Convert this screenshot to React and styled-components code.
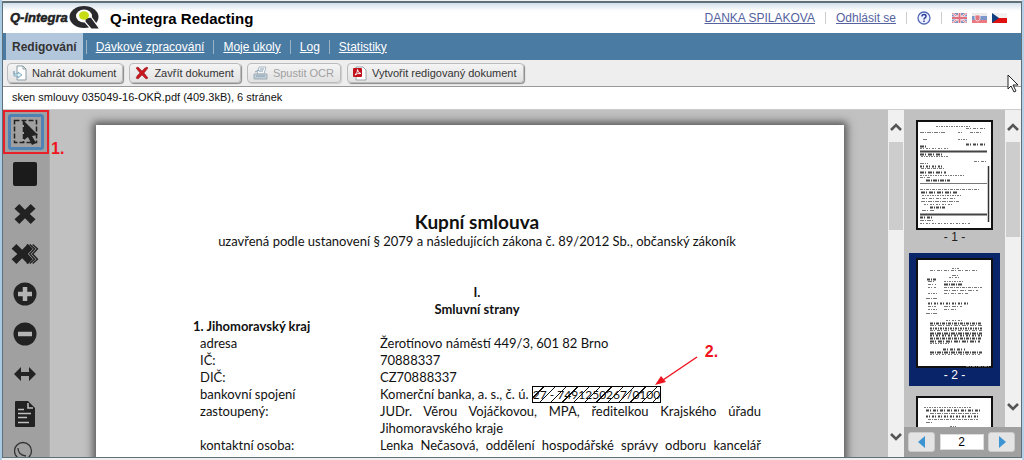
import React, { useState } from 'react'
import styled, { createGlobalStyle } from 'styled-components'

const color = {
  blue: '#4a7ba3',
  tab: '#b3c7dc',
  link: '#5562a0',
  panel: '#c1c1c1',
  rail: '#a0a0a0',
  track: '#f0f0f0',
  navy: '#0a246a',
  mark: '#e8202a',
}

const GlobalStyle = createGlobalStyle`
  * {
    box-sizing: border-box;
  }

  html, body, #root {
    height: 100%;
  }

  body {
    margin: 0;
    overflow: hidden;
    background: #f0f0f0;
    color: #111;
    font-family: "Liberation Sans", Arial, sans-serif;
    font-size: 12px;
  }
`

const Frame = styled.div`
  height: 100%;
  display: flex;
  flex-direction: column;
  padding: 1px 0 2px;
  border-left: 2px solid #a9cbe4;
  border-right: 2px solid #b4d0e8;
`

const Window = styled.div`
  flex: 1;
  min-height: 0;
  display: flex;
  flex-direction: column;
  border: 1px solid #5f7078;
  border-top-width: 2px;
  background: #fff;
`

const Header = styled.header`
  display: flex;
  align-items: center;
  justify-content: space-between;
  height: 30px;
  padding: 0 14px 0 6px;
  background: linear-gradient(#d3e0ea, #fff 8px);
`

const Brand = styled.div`
  display: flex;
  align-items: center;
  gap: 11px;
`

const Title = styled.h1`
  margin: 0;
  font-size: 15px;
  color: #000;
`

const UserLinks = styled.div`
  display: flex;
  align-items: center;
  gap: 10px;
`

const UserLink = styled.a`
  color: ${color.link};
  font-size: 12px;
`

const Divider = styled.span`
  width: 1px;
  height: ${props => (props.$tall ? 14 : 12)}px;
  background: ${props => (props.$tall ? '#9db3c6' : '#ccc')};
`

const HelpButton = styled.button`
  display: flex;
  padding: 0;
  border: 0;
  background: none;
`

const Flags = styled.div`
  display: flex;
  gap: 5px;
`

const FlagButton = styled(HelpButton)`
  opacity: ${props => (props.$active ? 1 : 0.6)};
`

const Nav = styled.nav`
  display: flex;
  align-items: center;
  gap: 9px;
  height: 27px;
  padding-left: 3px;
  background: ${color.blue};
`

const NavLink = styled.a`
  color: #fff;
  font-size: 12px;
`

const ActiveTab = styled.a`
  display: flex;
  align-items: center;
  align-self: stretch;
  padding: 0 6px;
  margin-right: -6px;
  background: ${color.tab};
  color: #333;
  font-weight: bold;
  text-decoration: none;
`

const Toolbar = styled.div`
  display: flex;
  align-items: center;
  gap: 6px;
  height: 27px;
  padding: 0 4px;
  border-bottom: 1px solid #999;
  background: #eee;
`

const ToolbarButton = styled.button`
  display: flex;
  align-items: center;
  gap: 5px;
  height: 20px;
  padding: 0 6px 0 5px;
  border: 1px solid #bbb;
  border-radius: 4px;
  background: linear-gradient(#f4f4f4, #e2e2e2);
  box-shadow: 1px 1px 1px #888;
  color: #333;
  font: 11px "Liberation Sans", Arial, sans-serif;
  white-space: nowrap;

  &:disabled {
    color: #a0a0a0;
    box-shadow: 1px 1px 1px #ccc;
  }
`

const FileInfo = styled.div`
  height: 23px;
  padding-left: 9px;
  line-height: 21px;
  font-size: 11px;
  border-bottom: 1px solid #ccc;
`

const Workspace = styled.div`
  flex: 1;
  min-height: 0;
  display: flex;
  background: ${color.panel};
`

const Rail = styled.aside`
  flex: none;
  width: 47px;
  display: flex;
  flex-direction: column;
  align-items: flex-start;
  overflow: hidden;
  background: ${color.rail};
  border-right: 1px solid #aaa;
`

const RailButton = styled.button`
  flex: none;
  display: flex;
  align-items: center;
  justify-content: center;
  width: 44px;
  height: 40px;
  padding: 0;
  border: 0;
  background: none;
`

const SelectButton = styled(RailButton)`
  width: 46px;
  height: 44px;
  border: 2px solid ${color.mark};
`

const SelectFace = styled.span`
  display: flex;
  align-items: center;
  justify-content: center;
  width: 36px;
  height: 36px;
  border: 3px solid #4f83b5;
  border-radius: 3px;
`

const Viewer = styled.main`
  flex: 1;
  min-width: 0;
  display: flex;
  justify-content: center;
  position: relative;
  padding: 15px 44px 0 46px;
  overflow: hidden;
`

const StepNote = styled.span`
  position: absolute;
  left: ${props => props.$left};
  top: ${props => props.$top};
  color: #f0141e;
  font: bold 16px "Liberation Sans", Arial, sans-serif;
`

const Page = styled.article`
  flex: 1;
  padding: 86px 83px 0 97px;
  height: 420px;
  background: #fff;
  box-shadow: 0 0 8px 3px #555;
  color: #111;
  font: 13px/17px Lato, Carlito, sans-serif;
`

const DocTitle = styled.h2`
  margin: 0;
  font-size: 19px;
  line-height: 22px;
  text-align: center;
`

const Centered = styled.p`
  margin: 0;
  text-align: center;
  font-weight: ${props => (props.$bold ? 'bold' : 'normal')};
`

const Article = styled.section`
  padding-top: 34px;
`

const PartyName = styled.h3`
  margin: 0;
  font-size: 13px;
`

const Parties = styled.dl`
  display: grid;
  grid-template-columns: 180px 1fr;
  grid-auto-rows: minmax(17px, auto);
  margin: 0 0 0 7px;
`

const Term = styled.dt``

const Detail = styled.dd`
  margin: 0;
  text-align: justify;

  &:last-child {
    text-align-last: justify;
  }
`

const Redacted = styled.span`
  position: relative;
  display: inline-block;
  height: 17px;
  border: 1px solid #000;
  background: repeating-linear-gradient(135deg, transparent 0 7px, #111 7px 8px);
  font-size: 12px;
  line-height: 15px;
  vertical-align: top;
`

const Arrow = styled.svg`
  position: absolute;
  left: 122px;
  top: -33px;
`

const Scrollbar = styled.div`
  flex: none;
  width: 16px;
  display: flex;
  flex-direction: column;
  align-items: center;
  background: ${color.track};
`

const ScrollButton = styled.button`
  display: flex;
  align-items: center;
  justify-content: center;
  width: 16px;
  height: ${props => props.$size}px;
  padding: 0;
  border: 0;
  background: none;
`

const Thumb = styled.div`
  width: 14px;
  height: ${props => props.$size}px;
  margin-bottom: auto;
  background: #cdcdcd;
`

const Sidebar = styled.aside`
  flex: none;
  width: 117px;
  display: flex;
  flex-direction: column;
`

const ThumbArea = styled.div`
  flex: 1;
  min-height: 0;
  display: flex;
`

const ThumbList = styled.div`
  flex: 1;
  display: flex;
  flex-direction: column;
  gap: 5px;
  padding: 5px 5px 0;
  overflow: hidden;
`

const Thumbnail = styled.button`
  flex: none;
  display: flex;
  flex-direction: column;
  align-items: center;
  height: 133px;
  padding: 5px 0 0;
  border: 0;
  background: ${props => (props.$active ? color.navy : 'none')};
  color: ${props => (props.$active ? '#fff' : '#222')};
  font: 12px/14px "Liberation Sans", Arial, sans-serif;
`

const Pager = styled.div`
  display: flex;
  align-items: center;
  justify-content: space-between;
  height: 30px;
  padding: 0 6px 0 4px;
  background: ${color.rail};
`

const PagerButton = styled.button`
  display: flex;
  align-items: center;
  justify-content: center;
  width: 27px;
  height: 20px;
  padding: 0;
  border: 1px solid #ccc;
  border-radius: 3px;
  background: #e4e4e4;
`

const PageInput = styled.input`
  width: 44px;
  height: 16px;
  padding: 0;
  border: 1px solid #ddd;
  background: #fff;
  text-align: center;
  font: 12px "Liberation Sans", Arial, sans-serif;
`

const MousePointer = styled.svg`
  position: absolute;
  right: 5px;
  top: 74px;
`

const Logo = () => (
  <svg width="90" height="27" viewBox="0 0 90 27" role="img" aria-label="Q-integra">
    <text x="1" y="17" fontFamily="Liberation Sans" fontSize="13" fontWeight="bold" fontStyle="italic" fill="#222" stroke="#222" strokeWidth=".5">Q-integra</text>
    <ellipse cx="75" cy="12" rx="14.500" ry="11" fill="#2a2a2e" />
    <ellipse cx="75" cy="11" rx="8" ry="6.500" fill="#fff" />
    <path d="M76 13l6-1 9 12h-9l-6-7z" fill="#2a2a2e" stroke="#fff" strokeWidth="1.200" />
    <ellipse cx="75" cy="10.500" rx="5" ry="4.200" fill="#c8dc14" />
  </svg>
)

const HelpIcon = () => (
  <svg width="14" height="14" viewBox="0 0 14 14">
    <circle cx="7" cy="7" r="6" fill="#eef1ff" stroke="#5369b8" strokeWidth="1.3" />
    <path d="M5 5.5q0-2 2-2t2 1.700q0 1-1 1.600t-1 1.600M7 9.600v1.400" fill="none" stroke="#2d3f9a" strokeWidth="1.500" />
  </svg>
)

const UkFlag = () => (
  <svg width="15" height="10" viewBox="0 0 15 10">
    <path fill="#24408e" d="M0 0h15v10H0z" />
    <path d="M0 0l15 10M15 0L0 10" stroke="#fff" strokeWidth="2" />
    <path d="M0 0l15 10M15 0L0 10" stroke="#d0142c" />
    <path d="M7.500 0v10M0 5h15" stroke="#fff" strokeWidth="3.200" />
    <path d="M7.500 0v10M0 5h15" stroke="#d0142c" strokeWidth="2" />
  </svg>
)

const SkFlag = () => (
  <svg width="15" height="10" viewBox="0 0 15 10">
    <path fill="#ddd" d="M0 0h15v4H0z" />
    <path fill="#2852a8" d="M0 3h15v4H0z" />
    <path fill="#e0202c" d="M0 7h15v3H0z" />
    <path d="M3 2h5v4q-1 2-2.500 2T3 6z" fill="#d02030" stroke="#fff" strokeWidth=".7" />
  </svg>
)

const CzFlag = () => (
  <svg width="15" height="10" viewBox="0 0 15 10">
    <path fill="#f2f2f2" d="M0 0h15v5H0z" />
    <path fill="#e01010" d="M0 5h15v5H0z" />
    <path fill="#123f80" d="M0 0l7 5-7 5z" />
  </svg>
)

const UploadIcon = () => (
  <svg width="14" height="16" viewBox="0 0 14 16">
    <path d="M4 1h6l3 3v11H4z" fill="#fff" stroke="#8a9ba5" />
    <path d="M10 1v3h3" fill="none" stroke="#8a9ba5" />
    <path d="M1 6v3h4V7l4 3-4 3v-2H1z" fill="#dff0f7" stroke="#6d9db4" strokeWidth=".8" />
  </svg>
)

const CloseIcon = () => (
  <svg width="14" height="14" viewBox="0 0 14 14">
    <path d="M1 2l2-1 4 4q2-3 5-4l1 1-4 5 4 5-2 1-4-4-4 4-2-1q1-3 4-5z" fill="#c8171e" stroke="#8e1015" strokeWidth=".5" />
  </svg>
)

const OcrIcon = () => (
  <svg width="15" height="15" viewBox="0 0 15 15" opacity=".6">
    <path d="M4 8l2-7h7l-2 7z" fill="#fff" stroke="#7d98aa" />
    <path d="M1 8h13v5H1z" fill="#a9bdc9" stroke="#6d8798" />
    <path d="M3 10h9M2 6l4-2M7 3h4M6 5h4" stroke="#456f8c" />
  </svg>
)

const PdfIcon = () => (
  <svg width="14" height="15" viewBox="0 0 14 15">
    <path d="M3 1h7l3 3v10H3z" fill="#fff" stroke="#9aa4aa" />
    <rect y="2" width="9" height="9" rx="1" fill="#c1121c" />
    <path d="M2 9q3-3 2.500-5.500Q5 7 8 7.500 4 7 2 9z" fill="none" stroke="#fff" strokeWidth=".9" />
  </svg>
)

const SelectIcon = () => (
  <svg width="26" height="28" viewBox="0 0 26 28">
    <path d="M1.500 2.500h22v22h-22zM10.500 2v23" fill="none" stroke="#222" strokeWidth="1.500" strokeDasharray="5 2" />
    <path d="M11 3v19l4-3 4 8 4-2-4-7 6-1z" fill="#222" />
  </svg>
)

const SquareIcon = () => (
  <svg width="24" height="24" viewBox="0 0 24 24">
    <rect width="24" height="24" rx="2" fill="#1b1b1b" />
  </svg>
)

const crossPath = 'M5 1l6 6 6-6 5 5-6 5.500 6 5.500-5 5-6-6-6 6-5-5 6-5.500L0 6z'

const CrossIcon = () => (
  <svg width="22" height="22" viewBox="0 0 22 23">
    <path d={crossPath} fill="#222" />
  </svg>
)

const CrossAllIcon = () => (
  <svg width="28" height="22" viewBox="0 0 28 23">
    <path d={crossPath} fill="#222" />
    <path d="M16 1.500l5 4.500-5 5.500 5 5.500-5 4.500M19 1.500l5 4.500-5 5.500 5 5.500-5 4.500M22 1.500l5 4.500-5 5.500 5 5.500-5 4.500" fill="none" stroke="#222" strokeWidth="1.500" />
  </svg>
)

const ZoomIcon = ({ plus }) => (
  <svg width="24" height="24" viewBox="0 0 24 24">
    <circle cx="12" cy="12" r="11.500" fill="#222" />
    <path d={plus ? 'M5 12h14M12 5v14' : 'M5 12h14'} stroke="#b4b4b4" strokeWidth="4.500" />
  </svg>
)

const FitIcon = () => (
  <svg width="24" height="14" viewBox="0 0 24 14">
    <path d="M1 7l7-7v5h8V0l7 7-7 7V9H8v5z" fill="#222" />
  </svg>
)

const TextIcon = () => (
  <svg width="20" height="26" viewBox="0 0 20 26">
    <path d="M1 0h12l7 7v18q0 1-1 1H1q-1 0-1-1V1q0-1 1-1z" fill="#222" />
    <path d="M13 2v5h5M3 8.500h6M3 12.500h13M3 16.500h9M3 21.500h11" fill="none" stroke="#c0c0c0" strokeWidth="1.500" />
  </svg>
)

const SearchIcon = () => (
  <svg width="22" height="26" viewBox="0 0 22 26">
    <circle cx="9" cy="10" r="8.500" fill="none" stroke="#333" strokeWidth="1.300" />
    <path d="M4 7q0 7 8 8M15 16l6 8" fill="none" stroke="#333" strokeWidth="1.300" />
  </svg>
)

const Chevron = ({ down }) => (
  <svg width="12" height="9" viewBox="0 0 12 9">
    <path d={down ? 'M1 1l5 5 5-5' : 'M1 8l5-5 5 5'} fill="none" stroke="#555" strokeWidth="2.600" />
  </svg>
)

const Triangle = ({ right }) => (
  <svg width="8" height="12" viewBox="0 0 8 12">
    <path d={right ? 'M1 0l7 6-7 6z' : 'M7 0L0 6l7 6z'} fill="#3c94d2" />
  </svg>
)

// rows: [y, x, width, weight]
const miniPages = {
  1: [
    [5, 20, 34, 1], [7, 50, 21, 1], [11, 4, 26, 1], [11, 42, 4, 1], [11, 54, 12, 1], [18, 7, 4, 1], [18, 42, 10, 1],
    [23, 50, 20, 2], [25, 4, 6, 2], [27, 4, 30, 1], [30, 4, 67, 2], [33, 4, 24, 2], [35, 5, 28, 1], [40, 58, 13, 1],
    [42, 4, 8, 1], [45, 4, 22, 2], [47, 5, 24, 1], [51, 4, 26, 2], [54, 4, 44, 1], [56, 4, 10, 1], [59, 10, 24, 2],
    [62, 4, 67, 1], [68, 4, 60, 1], [71, 5, 36, 2], [74, 6, 40, 1], [77, 6, 34, 1], [80, 5, 38, 1], [83, 8, 30, 1],
    [86, 14, 15, 2], [89, 6, 12, 1], [93, 4, 67, 2], [96, 4, 12, 2], [99, 4, 14, 1], [102, 4, 50, 1],
  ],
  2: [
    [9, 36, 8, 1], [11, 14, 48, 1], [16, 36, 6, 1], [18, 33, 12, 1], [20, 11, 10, 2], [22, 12, 8, 1], [22, 28, 20, 1],
    [25, 12, 8, 1], [25, 28, 18, 2], [28, 12, 9, 1], [28, 28, 38, 1], [31, 28, 34, 1], [34, 12, 9, 1], [34, 28, 24, 1],
    [39, 10, 12, 1], [44, 12, 40, 2], [47, 12, 8, 1], [47, 28, 18, 1], [50, 12, 10, 1], [50, 28, 14, 1], [54, 10, 12, 1],
    [61, 30, 16, 1], [64, 14, 52, 2], [66, 14, 52, 1], [69, 14, 52, 2], [71, 14, 52, 1], [74, 14, 52, 2], [76, 14, 52, 2],
    [79, 14, 51, 2], [82, 14, 50, 2], [84, 14, 20, 1], [90, 27, 22, 2], [93, 14, 52, 2], [95, 14, 50, 1], [107, 50, 24, 1],
  ],
  3: [
    [10, 8, 48, 1], [13, 10, 54, 2], [16, 14, 48, 1], [19, 10, 52, 2], [22, 12, 50, 1], [25, 10, 6, 1], [29, 34, 6, 1],
  ],
}

const MiniPage = ({ number }) => (
  <svg width="77" height="110" viewBox="0 0 77 110">
    <rect x="1" y="1" width="75" height="108" fill="#fff" stroke="#111" strokeWidth="2" />
    {miniPages[number].map(([y, x, width, weight], i) => (
      <path
        key={i}
        d={`M${x} ${y + 1.5}h${width}`}
        stroke={weight > 1 ? '#444' : '#777'}
        strokeWidth={weight > 1 ? 1.8 : 1}
        strokeDasharray={width > 64 ? null : `${2 + (i % 3)} 1 1 ${1 + (i % 2)}`}
      />
    ))}
    {number === 1 && <path d="M72.500 46v56" stroke="#333" strokeWidth="1.500" />}
  </svg>
)

const thumbnails = [
  { number: 1, caption: '- 1 -' },
  { number: 2, caption: '- 2 -' },
  { number: 3 },
]

const party = [
  ['adresa', 'Žerotínovo náměstí 449/3, 601 82 Brno'],
  ['IČ:', '70888337'],
  ['DIČ:', 'CZ70888337'],
  ['bankovní spojení', 'Komerční banka, a. s., č. ú. ', '27 - 7491250267/0100'],
  ['zastoupený:', 'JUDr. Věrou Vojáčkovou, MPA, ředitelkou Krajského úřadu Jihomoravského kraje'],
  ['kontaktní osoba:', 'Lenka Nečasová, oddělení hospodářské správy odboru kancelář'],
]

const railTools = [
  ['Začernit', SquareIcon],
  ['Smazat', CrossIcon],
  ['Smazat vše', CrossAllIcon],
  ['Zvětšit', () => <ZoomIcon plus />],
  ['Zmenšit', ZoomIcon],
  ['Na šířku', FitIcon],
  ['Text', TextIcon],
  ['Hledat', SearchIcon],
]

function App() {
  const [page, setPage] = useState(2)

  return (
    <Frame>
      <GlobalStyle />
      <Window>
        <Header>
          <Brand>
            <Logo />
            <Title>Q-integra Redacting</Title>
          </Brand>
          <UserLinks>
            <UserLink href="#user">DANKA SPILAKOVA</UserLink>
            <Divider />
            <UserLink href="#logout">Odhlásit se</UserLink>
            <Divider />
            <HelpButton aria-label="Nápověda"><HelpIcon /></HelpButton>
            <Divider />
            <Flags>
              <FlagButton aria-label="English"><UkFlag /></FlagButton>
              <FlagButton aria-label="Slovensky"><SkFlag /></FlagButton>
              <FlagButton aria-label="Česky" $active><CzFlag /></FlagButton>
            </Flags>
          </UserLinks>
        </Header>
        <Nav>
          <ActiveTab href="#redigovani">Redigování</ActiveTab>
          <Divider $tall />
          <NavLink href="#davky">Dávkové zpracování</NavLink>
          <Divider $tall />
          <NavLink href="#ukoly">Moje úkoly</NavLink>
          <Divider $tall />
          <NavLink href="#log">Log</NavLink>
          <Divider $tall />
          <NavLink href="#statistiky">Statistiky</NavLink>
        </Nav>
        <Toolbar>
          <ToolbarButton><UploadIcon />Nahrát dokument</ToolbarButton>
          <ToolbarButton><CloseIcon />Zavřít dokument</ToolbarButton>
          <ToolbarButton disabled><OcrIcon />Spustit OCR</ToolbarButton>
          <ToolbarButton><PdfIcon />Vytvořit redigovaný dokument</ToolbarButton>
        </Toolbar>
        <FileInfo>sken smlouvy 035049-16-OKŘ.pdf (409.3kB), 6 stránek</FileInfo>
        <Workspace>
          <Rail>
            <SelectButton aria-label="Výběr">
              <SelectFace><SelectIcon /></SelectFace>
            </SelectButton>
            {railTools.map(([label, ToolIcon]) => (
              <RailButton key={label} aria-label={label}><ToolIcon /></RailButton>
            ))}
          </Rail>
          <Viewer>
            <StepNote $left="1px" $top="30px">1.</StepNote>
            <Page>
              <DocTitle>Kupní smlouva</DocTitle>
              <Centered>uzavřená podle ustanovení § 2079 a následujících zákona č. 89/2012 Sb., občanský zákoník</Centered>
              <Article>
                <Centered $bold>I.</Centered>
                <Centered $bold>Smluvní strany</Centered>
                <PartyName>1. Jihomoravský kraj</PartyName>
                <Parties>
                  {party.map(([term, detail, secret]) => (
                    <React.Fragment key={term}>
                      <Term>{term}</Term>
                      <Detail>
                        {detail}
                        {secret && (
                          <Redacted>
                            {secret}
                            <Arrow width="70" height="36" viewBox="0 0 70 36">
                              <path d="M42 3L8 26" stroke="#f0141e" strokeWidth="1.500" />
                              <path d="M0 31l6-9 5 6z" fill="#f0141e" />
                            </Arrow>
                            <StepNote $left="172px" $top="-44px">2.</StepNote>
                          </Redacted>
                        )}
                      </Detail>
                    </React.Fragment>
                  ))}
                </Parties>
              </Article>
            </Page>
          </Viewer>
          <Scrollbar>
            <ScrollButton $size={32} aria-label="Nahoru"><Chevron /></ScrollButton>
            <Thumb $size={88} />
            <ScrollButton $size={40} aria-label="Dolů"><Chevron down /></ScrollButton>
          </Scrollbar>
          <Sidebar>
            <ThumbArea>
              <ThumbList>
                {thumbnails.map(({ number, caption }) => (
                  <Thumbnail
                    key={number}
                    aria-label={`Strana ${number}`}
                    $active={number === page}
                    onClick={() => setPage(number)}
                  >
                    <MiniPage number={number} />
                    {caption}
                  </Thumbnail>
                ))}
              </ThumbList>
              <Scrollbar>
                <ScrollButton $size={32} aria-label="Nahoru"><Chevron /></ScrollButton>
                <Thumb $size={95} />
                <ScrollButton $size={40} aria-label="Dolů"><Chevron down /></ScrollButton>
              </Scrollbar>
            </ThumbArea>
            <Pager>
              <PagerButton aria-label="Předchozí" onClick={() => setPage(Math.max(1, page - 1))}><Triangle /></PagerButton>
              <PageInput aria-label="Strana" value={page} onChange={e => setPage(Number(e.target.value) || 1)} />
              <PagerButton aria-label="Další" onClick={() => setPage(Math.min(6, page + 1))}><Triangle right /></PagerButton>
            </Pager>
          </Sidebar>
        </Workspace>
      </Window>
      <MousePointer width="12" height="19" viewBox="0 0 12 19">
        <path d="M1 1v14l3-3 3 6 2-1-3-6h5z" fill="#fff" stroke="#222" />
      </MousePointer>
    </Frame>
  )
}

export default App
